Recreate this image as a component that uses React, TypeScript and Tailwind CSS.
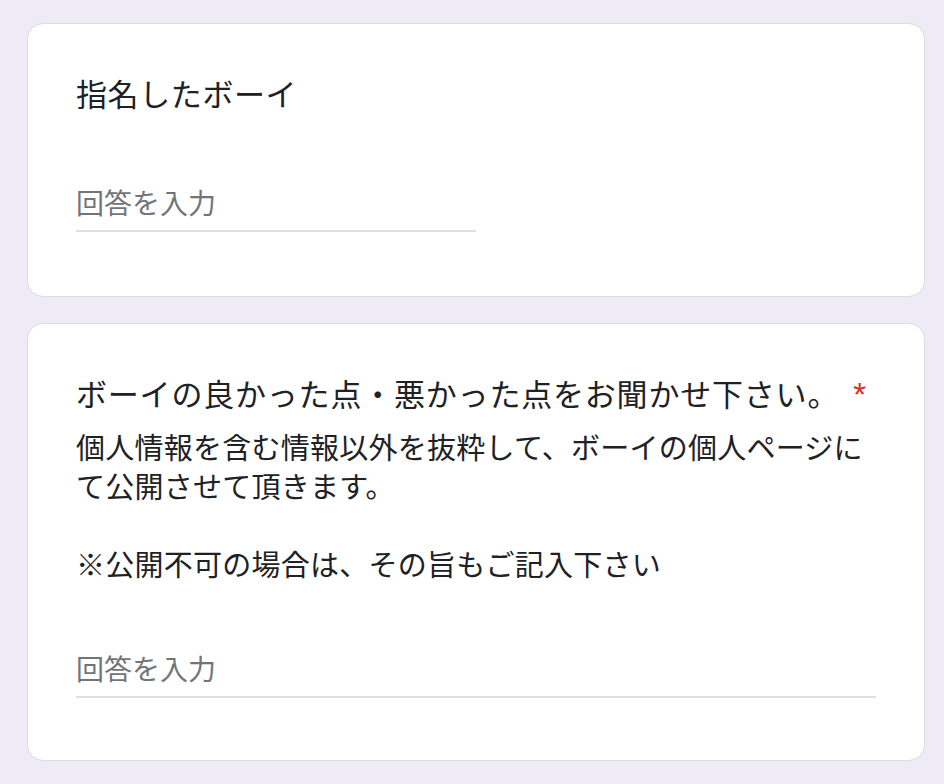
import React from 'react';

const font = { fontFamily: '"Noto Sans CJK JP", "Noto Sans", sans-serif' };

function AnswerInput({ wide }: { wide?: boolean }) {
  return (
    <div className={wide ? 'w-full' : 'w-1/2'}>
      <input
        type="text"
        placeholder="回答を入力"
        className="w-full h-[46px] bg-transparent outline-none text-[28px] text-[#202124] placeholder:text-[#70757a] border-b-2 border-[#e0e0e0] box-content pb-[5px]"
      />
    </div>
  );
}

export default function App() {
  return (
    <div
      className="h-screen overflow-hidden bg-[#eeebf6] pt-[23px] pl-[27px] pr-[19px] flex flex-col gap-[26px] text-[#202124]"
      style={font}
    >
      <div className="bg-white border border-[#dadce0] rounded-[16px] px-[48px] pt-[45px] pb-[64px]">
        <div className="text-[31px] tracking-[0.6px] leading-[48px]">指名したボーイ</div>
        <div className="mt-[62px]">
          <AnswerInput />
        </div>
      </div>

      <div className="bg-white border border-[#dadce0] rounded-[16px] px-[48px] pt-[45px] pb-[62px]">
        <div className="text-[31px] tracking-[0.8px] leading-[48px]">
          ボーイの良かった点・悪かった点をお聞かせ下さい。
          <span className="text-[#d93025] text-[33px] pl-[14px] font-['Liberation_Sans',sans-serif]">*</span>
        </div>
        <div className="mt-[8px] text-[29px] tracking-[0.25px] leading-[39px]">
          <p>個人情報を含む情報以外を抜粋して、ボーイの個人ページにて公開させて頂きます。</p>
          <p>&nbsp;</p>
          <p>※公開不可の場合は、その旨もご記入下さい</p>
        </div>
        <div className="mt-[62px]">
          <AnswerInput wide />
        </div>
      </div>
    </div>
  );
}
